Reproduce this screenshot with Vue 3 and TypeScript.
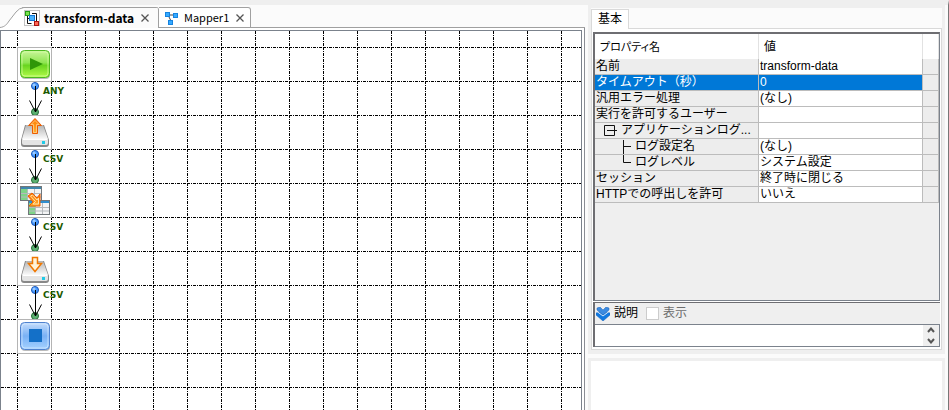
<script setup lang="ts">
import { ref } from 'vue'

type NodeKind = 'start' | 'output' | 'mapper' | 'input' | 'end'
interface FlowNode { kind: NodeKind; name: string; row: number; link?: string }
interface PropertyRow { name: string; value: string; tree?: 'open' | 'mid' | 'last' }

const nodes: FlowNode[] = [
  { kind: 'start', name: 'Start', row: 0, link: 'ANY' },
  { kind: 'output', name: 'Upload', row: 1, link: 'CSV' },
  { kind: 'mapper', name: 'Mapper', row: 2, link: 'CSV' },
  { kind: 'input', name: 'Download', row: 3, link: 'CSV' },
  { kind: 'end', name: 'End', row: 4 },
]

const properties: PropertyRow[] = [
  { name: '名前', value: 'transform-data' },
  { name: 'タイムアウト（秒）', value: '0' },
  { name: '汎用エラー処理', value: '(なし)' },
  { name: '実行を許可するユーザー', value: '' },
  { name: 'アプリケーションログ...', value: '', tree: 'open' },
  { name: 'ログ設定名', value: '(なし)', tree: 'mid' },
  { name: 'ログレベル', value: 'システム設定', tree: 'last' },
  { name: 'セッション', value: '終了時に閉じる' },
  { name: 'HTTPでの呼出しを許可', value: 'いいえ' },
]

const selected = ref(1)
const note = ref('')
</script>

<template>
  <div class="app">
    <main class="editor">
      <nav class="tabs">
        <div class="tab tab-active">
          <svg class="slope" width="24" height="21" viewBox="0 0 24 21" aria-hidden="true">
            <path d="M0 20.5 C5 20 7 17 9 14 L16 5 Q19 1 24 .5 V21 H0Z" fill="#fff" />
            <path d="M0 20.5 C5 20 7 17 9 14 L16 5 Q19 1 24 .5" fill="none" stroke="#a0a0a0" />
          </svg>
          <svg class="tab-icon" width="16" height="16" viewBox="0 0 16 16" aria-hidden="true">
            <rect x=".5" y=".5" width="15" height="15" fill="#fff" stroke="#888" stroke-dasharray="1 1" />
            <path d="M3.500 5V13.500H7.500M8 3.500H12.500V11M4 8.500H6" fill="none" stroke="#111" />
            <rect x="1.500" y="1.500" width="4" height="4" fill="#7be34d" stroke="#279a18" />
            <rect x="5.500" y="5.500" width="5" height="5" fill="#49b4ff" stroke="#1277d4" />
            <rect x="10.500" y="11.500" width="4" height="4" fill="#ff6650" stroke="#a91212" />
          </svg>
          <a href="#transform-data" class="tab-title strong">transform-data</a>
          <button type="button" class="close" aria-label="Close transform-data">
            <svg width="8" height="8" viewBox="0 0 8 8"><path d="M.5.5 7.500 7.500M7.500.5.5 7.500" stroke="#555" stroke-width="1.300" /></svg>
          </button>
        </div>
        <div class="tab tab-other">
          <svg class="tab-icon" width="16" height="16" viewBox="0 0 16 16" aria-hidden="true">
            <path d="M4 5H12M4 5 7 11" fill="none" stroke="#444" />
            <rect x="1.500" y="2.500" width="4" height="4" fill="#36aaff" stroke="#1683e0" />
            <rect x="9.500" y="3.500" width="4" height="4" fill="#36aaff" stroke="#1683e0" />
            <rect x="4.500" y="10.500" width="4" height="4" fill="#36aaff" stroke="#1683e0" />
          </svg>
          <a href="#mapper1" class="tab-title small">Mapper1</a>
          <button type="button" class="close" aria-label="Close Mapper1">
            <svg width="8" height="8" viewBox="0 0 8 8"><path d="M.5.5 7.500 7.500M7.500.5.5 7.500" stroke="#555" stroke-width="1.300" /></svg>
          </button>
        </div>
        <div class="tab-rest"></div>
      </nav>

      <div class="frame">
        <div class="canvas">
          <svg class="grid" width="100%" height="100%" aria-hidden="true">
            <defs>
              <pattern id="cells" x="16" y="16" width="34" height="34" patternUnits="userSpaceOnUse">
                <path d="M0 .5H34M.5 0V34" stroke="#000" stroke-dasharray="3 1 1 1" fill="none" />
              </pattern>
            </defs>
            <rect width="100%" height="100%" fill="url(#cells)" />
          </svg>

          <template v-for="node in nodes" :key="node.row">
            <div class="node" :style="{ top: 16 + node.row * 68 + 'px' }" :title="node.name">
              <svg width="33" height="33" viewBox="0 0 33 33">
                <defs>
                  <linearGradient id="green" x2="0" y2="1">
                    <stop offset="0" stop-color="#c9f59b" /><stop offset=".45" stop-color="#8fe552" />
                    <stop offset=".55" stop-color="#69d51f" /><stop offset="1" stop-color="#b4fb4a" />
                  </linearGradient>
                  <linearGradient id="blue" x2="0" y2="1">
                    <stop offset="0" stop-color="#c5ddfb" /><stop offset=".5" stop-color="#79b1f5" />
                    <stop offset="1" stop-color="#a5d2ff" />
                  </linearGradient>
                  <linearGradient id="metal" x2="0" y2="1">
                    <stop offset="0" stop-color="#b4b4b4" /><stop offset="1" stop-color="#fafafa" />
                  </linearGradient>
                  <linearGradient id="orange" x2="0" y2="1">
                    <stop offset="0" stop-color="#ff7a00" /><stop offset="1" stop-color="#ffb02e" />
                  </linearGradient>
                </defs>

                <g v-if="node.kind === 'start'">
                  <rect x="3" y="4" width="29" height="27" rx="4" fill="#bbb" />
                  <rect x="2.500" y="2.500" width="29" height="27" rx="4" fill="url(#green)" stroke="#4bb820" />
                  <rect x="4" y="4" width="26" height="24" rx="3" fill="none" stroke="#d5ffa5" opacity=".7" />
                  <path d="M12 10 25 16 12 22Z" fill="#2f9608" />
                </g>

                <g v-else-if="node.kind === 'end'">
                  <rect x="3" y="4" width="29" height="27" rx="4" fill="#bbb" />
                  <rect x="2.500" y="2.500" width="29" height="27" rx="4" fill="url(#blue)" stroke="#4f82cf" />
                  <rect x="4" y="4" width="26" height="24" rx="3" fill="none" stroke="#d5eaff" opacity=".7" />
                  <rect x="11" y="9" width="13" height="13" fill="#1470c8" />
                </g>

                <g v-else-if="node.kind === 'mapper'">
                  <g v-for="(p, i) in [[2, 2], [10, 16]]" :key="i" :transform="`translate(${p[0]} ${p[1]})`">
                    <rect x=".5" y=".5" width="21" height="14" fill="#f3f4f5" stroke="#70767a" />
                    <path d="M1 1H21V3H1Z" :fill="i === 0 ? '#3f87ae' : '#2f8fd0'" />
                    <path d="M1 3H7V14H1Z" fill="#7ed488" />
                    <path d="M1 7.500H21M1 11H21M7.500 3V14M14.500 3V14" stroke="#b5b9bc" fill="none" />
                  </g>
                  <path d="M10 12 14 9 19 14 22 10V22H11L15 18Z" fill="url(#orange)" stroke="#ed5c00" />
                  <path d="M12.500 12 14.500 11 19 16 20.500 14V20H15L17.500 17.500Z" fill="none" stroke="#ffe0aa" />
                </g>

                <g v-else>
                  <path d="M7 9H26L31 24V28Q31 31 28 31H6Q3 31 3 28V24Z" fill="#888" />
                  <path d="M8 9H25L30 23H4Z" fill="url(#metal)" />
                  <path d="M4 23H30V27Q30 29 28 29H6Q4 29 4 27Z" fill="#e4e4e4" />
                  <path d="M5 23.500H29" stroke="#fff" />
                  <rect x="24" y="25" width="3" height="3" fill="#20cbe8" />
                  <g v-if="node.kind === 'output'">
                    <path d="M17 2.500 23.500 9.500H19.500V17.500H14.500V9.500H10.500Z" fill="url(#orange)" stroke="#ed5c00" />
                    <path d="M15.500 16.500V8.500H13L17 4.500 21 8.500H18.500V16.500Z" fill="none" stroke="#ffd9a0" stroke-width=".7" />
                  </g>
                  <path v-else d="M14.500 5.500H19.500V11.500H23.500L17 19.500 10.500 11.500H14.500Z" fill="#fff3d8" stroke="#f07800" stroke-width="1.500" />
                </g>
              </svg>
            </div>

            <div v-if="node.link" class="link" :style="{ top: 51 + node.row * 68 + 'px' }">
              <svg width="16" height="36" viewBox="0 0 16 36" aria-hidden="true">
                <circle cx="8" cy="4" r="3.500" fill="#4b9cff" stroke="#1552b8" />
                <circle cx="7" cy="3" r="1.500" fill="#9dccff" />
                <circle cx="8" cy="30" r="3.500" fill="#5cb070" stroke="#246b36" />
                <path d="M8.500 4V30M2.500 18.500 8.500 30 14.500 18.500" fill="none" stroke="#000" />
              </svg>
              <span class="link-name">{{ node.link }}</span>
            </div>
          </template>
        </div>
      </div>
    </main>

    <aside class="side">
      <section class="inspector">
        <div class="pane-tabs">
          <button type="button" class="pane-tab">基本</button>
        </div>
        <div class="pane">
          <div class="sheet">
            <table>
              <colgroup><col class="c-name" /><col class="c-value" /><col class="c-end" /></colgroup>
              <thead>
                <tr><th scope="col">プロパティ名</th><th scope="col">値</th><th></th></tr>
              </thead>
              <tbody>
                <tr v-for="(row, i) in properties" :key="row.name" :class="{ selected: i === selected }" @click="selected = i">
                  <td class="name">
                    <div class="name-box" :class="row.tree">
                      <button v-if="row.tree === 'open'" type="button" class="toggle" aria-label="アプリケーションログ">
                        <svg width="15" height="15" viewBox="0 0 15 15"><path d="M1.500 2.500H11.500V12.500H1.500ZM4 7.500H14" fill="none" stroke="#111" /></svg>
                      </button>
                      <svg v-else-if="row.tree" class="branch" width="10" height="15" viewBox="0 0 10 15" aria-hidden="true">
                        <path :d="row.tree === 'mid' ? 'M1.500 1V15M1.500 7.500H9' : 'M1.500 0V7.500H9'" fill="none" stroke="#111" />
                      </svg>
                      <span>{{ row.name }}</span>
                    </div>
                  </td>
                  <td class="value">{{ row.value }}</td>
                  <td class="end"></td>
                </tr>
              </tbody>
            </table>
          </div>

          <div class="memo">
            <div class="memo-head">
              <svg width="14" height="14" viewBox="0 0 14 14" aria-hidden="true">
                <path d="M1 1 4 0 7 3 10 0 13 1V3L7 8 1 3Z" fill="#3c8be0" stroke="#1a62b8" stroke-width=".5" />
                <path d="M0 6 3 5 7 8 11 5 14 6V8L7 14 0 8Z" fill="#1179e0" stroke="#1a62b8" stroke-width=".5" />
                <path d="M1 4.500 7 9 13 4.500" fill="none" stroke="#d6e8fa" />
              </svg>
              <label for="memo" class="memo-title">説明</label>
              <label class="show"><input type="checkbox" disabled />表示</label>
            </div>
            <div class="memo-box">
              <textarea id="memo" v-model="note" rows="1"></textarea>
              <div class="scroller">
                <button type="button" aria-label="Scroll up"><svg width="8" height="6" viewBox="0 0 8 6"><path d="M1 5 4 1.500 7 5" fill="none" stroke="#555" stroke-width="2" /></svg></button>
                <button type="button" aria-label="Scroll down"><svg width="8" height="6" viewBox="0 0 8 6"><path d="M1 1 4 4.500 7 1" fill="none" stroke="#555" stroke-width="2" /></svg></button>
              </div>
            </div>
          </div>
        </div>
      </section>
      <section class="lower"></section>
    </aside>
  </div>
</template>

<style>
body {
  background: #fbfbfb;
}
</style>

<style scoped>
.app {
  display: grid;
  grid-template-columns: minmax(0, 1fr) 360px;
  gap: 3px;
  box-sizing: border-box;
  height: 100vh;
  border-top: 5px solid #efefef;
  border-right: 1px solid #777;
  font: 12px/15px "Liberation Sans", "Noto Sans CJK JP", sans-serif;
  color: #000;
}
button {
  padding: 0;
  border: 0;
  background: none;
  font: inherit;
  color: inherit;
}
svg {
  display: block;
}

.editor {
  display: flex;
  flex-direction: column;
  min-width: 0;
  padding-top: 2px;
}
.tabs {
  display: flex;
  height: 21px;
}
.tab {
  display: flex;
  align-items: center;
  box-sizing: border-box;
  background: #fff;
}
.tab-active {
  width: 159px;
  border-radius: 0 3px 0 0;
  background: linear-gradient(#a0a0a0, #a0a0a0) right top / 136px 1px no-repeat;
  border-right: 1px solid #a0a0a0;
}
.tab-other {
  width: 92px;
  padding-left: 5px;
  border: 1px solid #a0a0a0;
  border-left: 0;
  border-radius: 0 3px 0 0;
}
.tab-rest {
  flex: 1;
  border-bottom: 1px solid #a0a0a0;
}
.tab-icon {
  flex: none;
}
.tab-title {
  margin-left: 4px;
  font-family: "Noto Sans CJK JP", sans-serif;
  color: #000;
  text-decoration: none;
}
.strong {
  font-weight: 700;
}
.small {
  font-size: 11px;
}
.close {
  margin-left: 7px;
}
.frame {
  display: flex;
  flex: 1;
  min-height: 0;
  padding: 2px 2px 0 0;
  border-right: 1px solid #8a8d94;
  background: #fff;
}
.canvas {
  position: relative;
  flex: 1;
  overflow: hidden;
  border: 1px solid #7b828c;
  border-bottom: 0;
  background: #fff;
}
.grid {
  position: absolute;
  inset: 0;
}
.node {
  position: absolute;
  left: 16px;
  border: 1px solid #b4b4b4;
  background: #fff;
}
.link {
  position: absolute;
  left: 26px;
  display: flex;
}
.link-name {
  font: 700 9px/18px "DejaVu Sans", sans-serif;
  color: #1c5a00;
}

.side {
  display: flex;
  flex-direction: column;
  gap: 4px;
  padding-right: 3px;
}
.inspector {
  padding: 3px 3px 4px;
  background: #efefef;
}
.pane-tabs {
  display: flex;
  height: 20px;
  border-bottom: 1px solid #d9d9d9;
  background: #fbfbfb;
}
.pane-tab {
  width: 38px;
  margin: 1px 0 -1px;
  border: 1px solid #d9d9d9;
  border-bottom: 0;
  background: #fff;
}
.pane {
  padding: 3px 1px 2px;
  border: 1px solid #d9d9d9;
  border-top: 0;
  background: #fff;
}
.sheet {
  box-sizing: border-box;
  height: 269px;
  border: 1px solid #7b828c;
  border-top: 2px solid #6e6e72;
  border-left: 2px solid #6e6e72;
  background: #efefef;
}
table {
  width: 100%;
  table-layout: fixed;
  border-spacing: 0;
  background: #fff;
}
.c-name {
  width: 164px;
}
.c-end {
  width: 16px;
}
th,
td {
  box-sizing: border-box;
  height: 16px;
  padding: 0 0 0 1px;
  border-right: 1px solid #bcbcbc;
  border-bottom: 1px solid #bcbcbc;
  text-align: left;
  white-space: nowrap;
  overflow: hidden;
}
th {
  height: 25px;
  padding: 2px 0 0 5px;
  border-right: 1px solid #e2e2e2;
  border-bottom: 0;
  font-weight: 400;
  font-feature-settings: "palt";
}
th:first-child {
  font-size: 11px;
}
td.name,
td.end {
  background: #ededed;
}
.name-box {
  display: flex;
  align-items: center;
  height: 15px;
}
.open {
  padding-left: 7px;
  gap: 3px;
}
.mid,
.last {
  padding-left: 26px;
  gap: 3px;
}
.selected .name,
.selected .value {
  background: #0078d7;
  color: #fff;
}

.memo {
  margin-top: 1px;
  border-left: 2px solid #6e6e72;
  border-top: 1px solid #6e6e72;
}
.memo-head {
  display: flex;
  align-items: center;
  height: 21px;
  padding-left: 1px;
  background: #efefef;
}
.memo-title {
  margin: 0 8px 0 4px;
}
.show {
  display: flex;
  align-items: center;
  gap: 4px;
  color: #6d6d6d;
}
.show input {
  appearance: none;
  box-sizing: border-box;
  width: 13px;
  height: 13px;
  margin: 0;
  border: 1px solid #ccc;
  background: #fff;
}
.memo-box {
  display: flex;
  border: 1px solid #7b828c;
  border-left: 0;
}
.memo-box textarea {
  flex: 1;
  box-sizing: border-box;
  height: 21px;
  padding: 2px;
  border: 0;
  outline: 0;
  resize: none;
  overflow: hidden;
  font: inherit;
}
.scroller {
  display: flex;
  flex-direction: column;
  justify-content: space-around;
  align-items: center;
  width: 16px;
  background: #efefef;
}
.lower {
  flex: 1;
  border: 3px solid #efefef;
  border-bottom: 0;
  background: #fff;
}
</style>
